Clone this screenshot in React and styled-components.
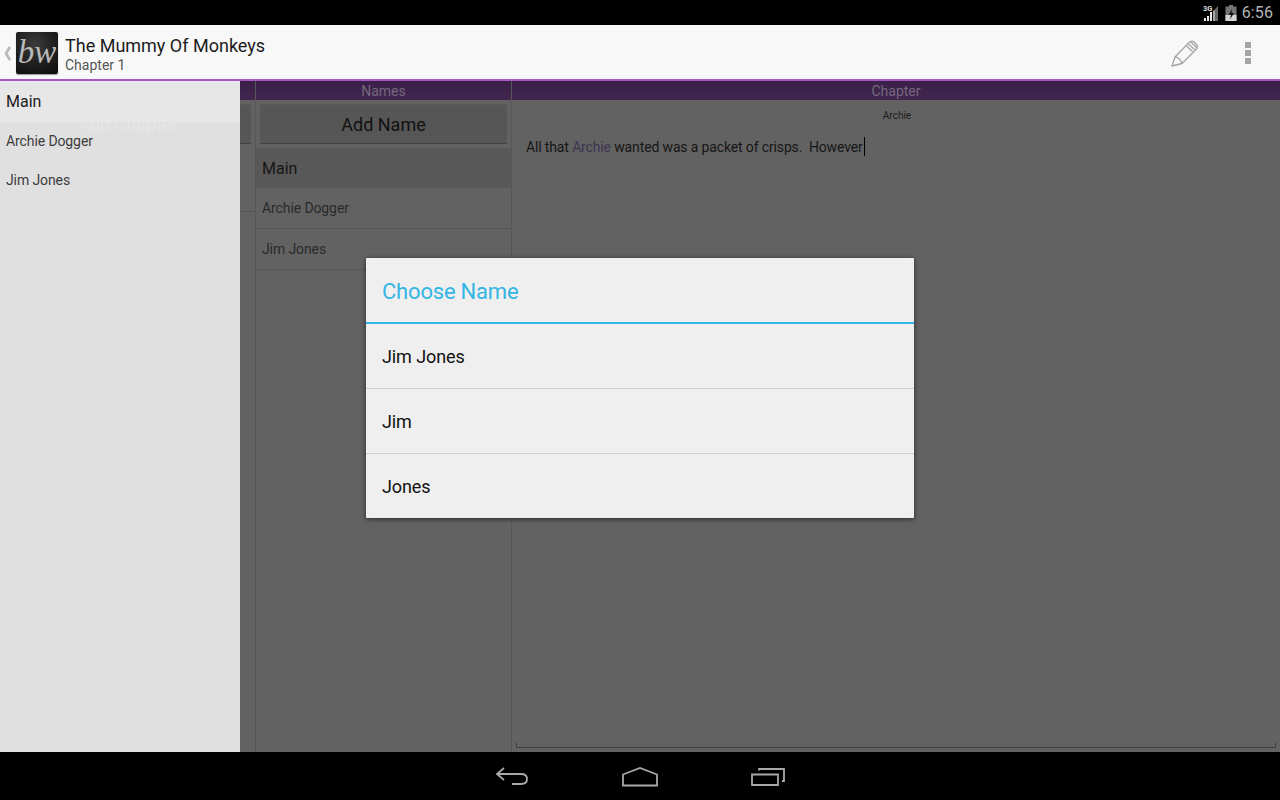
import React from 'react';
import styled, { createGlobalStyle } from 'styled-components';

const NAMES = ['Archie Dogger', 'Jim Jones'];
const CHOICES = ['Jim Jones', 'Jim', 'Jones'];

const GlobalStyle = createGlobalStyle`
  *, *::before, *::after {
    box-sizing: border-box;
  }
  html, body {
    margin: 0;
    padding: 0;
    background: #000;
  }
  body {
    font-family: Roboto, "Liberation Sans", sans-serif;
  }
`;

const App = () => {
  return (
    <Screen>
      <GlobalStyle />
      <StatusBar>
        <SignalIcon />
        <BatteryIcon />
        <Clock>6:56</Clock>
      </StatusBar>

      <ActionBar>
        <CaretIcon />
        <Logo>
          <LogoText>bw</LogoText>
        </Logo>
        <Titles>
          <Title>The Mummy Of Monkeys</Title>
          <Subtitle>Chapter 1</Subtitle>
        </Titles>
        <Actions>
          <PencilIcon />
          <Overflow>
            <Dot />
            <Dot />
            <Dot />
          </Overflow>
        </Actions>
      </ActionBar>

      <Body>
        <Panes>
          <Pane>
            <PaneHeader />
            <AddButtonRow>
              <AddButton />
            </AddButtonRow>
            <ChapterRow />
          </Pane>
          <Pane>
            <PaneHeader>Names</PaneHeader>
            <AddButtonRow>
              <AddButton>Add Name</AddButton>
            </AddButtonRow>
            <GroupRow>Main</GroupRow>
            {NAMES.map((name) => (
              <NameRow key={name}>{name}</NameRow>
            ))}
          </Pane>
          <EditorPane>
            <PaneHeader>Chapter</PaneHeader>
            <EditorLabel>Archie</EditorLabel>
            <EditorText>
              All that <Link>Archie</Link> wanted was a packet of crisps.&nbsp; However
              <Cursor />
            </EditorText>
            <EditorField />
          </EditorPane>
        </Panes>

        <Drawer>
          <DrawerHeader>Main</DrawerHeader>
          <GhostTitle>Add Chapter</GhostTitle>
          <GhostSub>Chapter 1</GhostSub>
          {NAMES.map((name) => (
            <DrawerRow key={name}>{name}</DrawerRow>
          ))}
        </Drawer>

        <Dialog>
          <DialogTitle>Choose Name</DialogTitle>
          {CHOICES.map((choice) => (
            <Choice key={choice}>{choice}</Choice>
          ))}
        </Dialog>
      </Body>

      <NavBar>
        <BackIcon />
        <HomeIcon />
        <RecentsIcon />
      </NavBar>
    </Screen>
  );
};

const SignalIcon = () => (
  <StatusSvg width="18" height="18" viewBox="0 0 18 18">
    <text x="1" y="7" fontSize="7.5" fontWeight="700" fill="#ddd" fontFamily="Roboto, sans-serif">3G</text>
    <path d="M2 17h2v-3H2zM5 17h2v-5H5zM8 17h2V8H8z" fill="#e8e8e8" />
    <path d="M11 17h5V2l-5 5z" fill="#666" />
    <path d="M11 17h2V7h-2z" fill="#e8e8e8" opacity="0.5" />
  </StatusSvg>
);

const BatteryIcon = () => (
  <StatusSvg width="12" height="16" viewBox="0 0 12 16">
    <path d="M4 0h4v2H4z" fill="#777" />
    <rect x="0.5" y="1.500" width="11" height="14.500" fill="#747474" />
    <rect x="0.5" y="10" width="11" height="6" fill="#d4d4d4" />
    <path d="M7 4 3.500 10H6l-1 4.500 4-6.500H6.500z" fill="#111" />
  </StatusSvg>
);

const CaretIcon = () => (
  <CaretSvg width="16" height="16" viewBox="0 0 16 16">
    <path d="M10 2 6 8.500l4 6.500" fill="none" stroke="#b8b8b8" strokeWidth="2.600" />
  </CaretSvg>
);

const PencilIcon = () => (
  <PencilSvg width="30" height="30" viewBox="0 0 30 30">
    <path
      d="M2 28l3-9L19 4.500c1.500-1.500 3.500-1.800 5-.5l2.500 2.500c1.300 1.500 1 3.500-.5 5L12 25.500zM5 19c3 .2 6 3 7 6.500M16 7.500l7.500 7M18 5.500l7.500 7M20.500 3.500l6 6"
      fill="none"
      stroke="#a4a4a4"
      strokeWidth="1.300"
      strokeLinejoin="round"
    />
  </PencilSvg>
);

const BackIcon = () => (
  <svg width="34" height="20" viewBox="0 0 34 20">
    <path
      d="M9 1 2 7l7 6M2 7h24c4 0 6 2 6 5s-2 5-6 5H17"
      fill="none"
      stroke="#a8a8a8"
      strokeWidth="1.800"
    />
  </svg>
);

const HomeIcon = () => (
  <svg width="36" height="20" viewBox="0 0 36 20">
    <path d="M1 7.500 18 1l17 6.500V18.500H1z" fill="none" stroke="#a8a8a8" strokeWidth="1.800" />
  </svg>
);

const RecentsIcon = () => (
  <svg width="34" height="20" viewBox="0 0 34 20">
    <path
      d="M1 7.500h26v10.500H1zM8 3.500V2h25v12h-2"
      fill="none"
      stroke="#a8a8a8"
      strokeWidth="1.800"
    />
  </svg>
);

const Screen = styled.div`
  width: 1280px;
  height: 800px;
  display: flex;
  flex-direction: column;
  overflow: hidden;
  background: #000;
`;

const StatusBar = styled.div`
  flex: 0 0 25px;
  display: flex;
  align-items: center;
  justify-content: flex-end;
  gap: 5px;
  padding-right: 7px;
  background: #000;
`;

const StatusSvg = styled.svg`
  display: block;
`;

const Clock = styled.span`
  font-size: 16px;
  letter-spacing: 0.1px;
  color: #b4b4b4;
`;

const ActionBar = styled.header`
  flex: 0 0 56px;
  display: flex;
  align-items: center;
  background: #f8f8f8;
  border-bottom: 2px solid #a658c4;
`;

const CaretSvg = styled.svg`
  display: block;
  flex: 0 0 16px;
  margin-top: 1px;
`;

const Logo = styled.div`
  width: 42px;
  height: 42px;
  margin-top: 1px;
  display: flex;
  align-items: center;
  justify-content: center;
  border-radius: 2px;
  background: radial-gradient(circle at 45% 30%, #3c3c3c 0%, #1e1e1e 55%, #0c0c0c 100%);
  box-shadow: 0 1px 1px #999;
`;

const LogoText = styled.span`
  font-family: "Liberation Serif", serif;
  font-style: italic;
  font-size: 33px;
  line-height: 33px;
  color: #b8b8b8;
`;

const Titles = styled.div`
  margin-left: 7px;
  padding-top: 3px;
  display: flex;
  flex-direction: column;
`;

const Title = styled.div`
  font-size: 18px;
  line-height: 24px;
  color: #1c1c1c;
`;

const Subtitle = styled.div`
  margin-top: -1px;
  font-size: 14px;
  line-height: 16px;
  color: #555;
`;

const Actions = styled.div`
  margin-left: auto;
  margin-top: 2px;
  display: flex;
  align-items: center;
  gap: 45px;
  padding-right: 29px;
`;

const PencilSvg = styled.svg`
  display: block;
`;

const Overflow = styled.div`
  display: flex;
  flex-direction: column;
  gap: 2px;
`;

const Dot = styled.span`
  width: 6px;
  height: 6px;
  background: #a4a4a4;
`;

const Body = styled.main`
  flex: 1;
  position: relative;
  overflow: hidden;
  background: #626262;
`;

const Panes = styled.div`
  height: 100%;
  display: grid;
  grid-template-columns: 256px 256px 1fr;
`;

const Pane = styled.section`
  display: flex;
  flex-direction: column;
  border-right: 1px solid #575757;
`;

const EditorPane = styled.section`
  position: relative;
  display: flex;
  flex-direction: column;
`;

const PaneHeader = styled.div`
  flex: 0 0 19px;
  min-height: 0;
  overflow: hidden;
  font-size: 14px;
  line-height: 21px;
  text-align: center;
  color: #76687c;
  background: linear-gradient(#3a2049, #42264f);
`;

const AddButtonRow = styled.div`
  padding: 4px;
`;

const AddButton = styled.div`
  height: 40px;
  font-size: 18px;
  line-height: 40px;
  text-align: center;
  color: #111;
  background: #565656;
  border-top: 1px solid #5a5a5a;
  border-bottom: 1px solid #424242;
`;

const ChapterRow = styled.div`
  height: 64px;
  border-bottom: 1px solid #575757;
`;

const GroupRow = styled.div`
  height: 40px;
  padding-left: 6px;
  font-size: 16px;
  line-height: 42px;
  color: #161616;
  background: #585858;
`;

const NameRow = styled.div`
  height: 41px;
  padding-left: 6px;
  font-size: 14px;
  line-height: 40px;
  letter-spacing: -0.1px;
  color: #2a2a2a;
  border-bottom: 1px solid #575757;
`;

const EditorLabel = styled.div`
  margin-top: 10px;
  padding-left: 2px;
  font-size: 10px;
  line-height: 12px;
  text-align: center;
  color: #1c1c1c;
`;

const EditorText = styled.div`
  margin: 15px 0 0 14px;
  font-size: 14px;
  line-height: 20px;
  letter-spacing: -0.14px;
  color: #161616;
`;

const Link = styled.span`
  color: #3d3550;
`;

const Cursor = styled.span`
  display: inline-block;
  width: 1px;
  height: 19px;
  margin-left: 1px;
  vertical-align: -4px;
  background: #000;
`;

const EditorField = styled.div`
  margin: auto 4px 4px 4px;
  height: 5px;
  border: 1px solid #404040;
  border-top: 0;
`;

const Drawer = styled.aside`
  position: absolute;
  top: 0;
  left: 0;
  bottom: 0;
  width: 240px;
  background: #e0e0e0;
`;

const DrawerHeader = styled.div`
  position: relative;
  z-index: 1;
  height: 41px;
  padding-left: 6px;
  font-size: 16px;
  line-height: 41px;
  color: #1c1c1c;
  background: #e7e7e7;
`;

const DrawerRow = styled.div`
  height: 39px;
  padding-left: 6px;
  font-size: 14px;
  line-height: 39px;
  letter-spacing: -0.1px;
  color: #3c3c3c;
`;

const GhostTitle = styled.div`
  position: absolute;
  top: 32px;
  left: 0;
  width: 256px;
  font-size: 18px;
  line-height: 24px;
  text-align: center;
  color: #e6e6e6;
`;

const GhostSub = styled.div`
  position: absolute;
  top: 76px;
  left: 0;
  width: 254px;
  font-size: 14px;
  line-height: 18px;
  letter-spacing: 0.5px;
  text-align: center;
  color: #e3e3e3;
`;

const Dialog = styled.div`
  position: absolute;
  top: 177px;
  left: 366px;
  width: 548px;
  background: #efefef;
  border-radius: 1px;
  box-shadow: 0 1px 5px rgba(0, 0, 0, 0.6);
`;

const DialogTitle = styled.div`
  height: 66px;
  padding-left: 16px;
  font-size: 22px;
  line-height: 67px;
  letter-spacing: -0.2px;
  color: #33b5e5;
  border-bottom: 2px solid #33b5e5;
`;

const Choice = styled.div`
  height: 65px;
  padding-left: 16px;
  font-size: 18px;
  line-height: 65px;
  letter-spacing: -0.1px;
  color: #111;
  border-bottom: 1px solid #cfcfcf;

  &:last-child {
    height: 64px;
    border-bottom: 0;
  }
`;

const NavBar = styled.nav`
  flex: 0 0 48px;
  display: flex;
  align-items: center;
  justify-content: center;
  gap: 93px;
  padding-top: 2px;
  background: #000;
`;

export default App;
